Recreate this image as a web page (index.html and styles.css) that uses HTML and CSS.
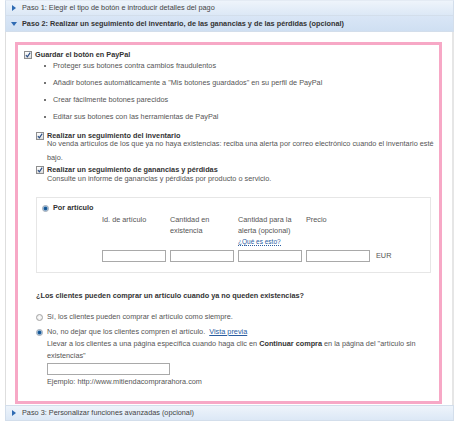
FILE: index.html
```html
<!DOCTYPE html>
<html lang="es">
<head>
<meta charset="utf-8">
<title>Paso 2</title>
<link rel="stylesheet" href="styles.css">
</head>
<body>
<div class="acc">
  <div class="head head-first"><span class="tri-r"></span><span>Paso 1: Elegir el tipo de botón e introducir detalles del pago</span></div>
  <div class="head head-open"><span class="tri-d"></span><span>Paso 2: Realizar un seguimiento del inventario, de las ganancias y de las pérdidas (opcional)</span></div>
  <div class="panel">
    <div class="pink">
      <div class="chk-row">
        <span class="cb"><svg width="8" height="8" viewBox="0 0 8 8"><path d="M1.9 4.1 L3.4 5.8 L6.2 1.7" fill="none" stroke="#2c4f86" stroke-width="1.2"/></svg></span>
        <span class="lbl">Guardar el botón en PayPal</span>
      </div>
      <ul class="bullets">
        <li>Proteger sus botones contra cambios fraudulentos</li>
        <li>Añadir botones automáticamente a "Mis botones guardados" en su perfil de PayPal</li>
        <li>Crear fácilmente botones parecidos</li>
        <li>Editar sus botones con las herramientas de PayPal</li>
      </ul>
      <div class="sub">
        <div class="chk-row r2">
          <span class="cb"><svg width="8" height="8" viewBox="0 0 8 8"><path d="M1.9 4.1 L3.4 5.8 L6.2 1.7" fill="none" stroke="#2c4f86" stroke-width="1.2"/></svg></span>
          <span class="lbl">Realizar un seguimiento del inventario</span>
        </div>
        <p class="desc">No venda artículos de los que ya no haya existencias: reciba una alerta por correo electrónico cuando el inventario esté<br>bajo.</p>
        <div class="chk-row r3">
          <span class="cb"><svg width="8" height="8" viewBox="0 0 8 8"><path d="M1.9 4.1 L3.4 5.8 L6.2 1.7" fill="none" stroke="#2c4f86" stroke-width="1.2"/></svg></span>
          <span class="lbl">Realizar un seguimiento de ganancias y pérdidas</span>
        </div>
        <p class="desc d3">Consulte un informe de ganancias y pérdidas por producto o servicio.</p>

        <div class="item-box">
          <div class="radio-row">
            <span class="rb on"></span><span class="lbl">Por artículo</span>
          </div>
          <div class="cols">
            <div class="col-lbl">Id. de artículo</div>
            <div class="col-lbl">Cantidad en<br>existencia</div>
            <div class="col-lbl">Cantidad para la<br>alerta (opcional)<br><a class="help">¿Qué es esto?</a></div>
            <div class="col-lbl">Precio</div>
            <div></div>
            <input class="field" type="text">
            <input class="field" type="text">
            <input class="field" type="text">
            <input class="field" type="text">
            <span class="cur">EUR</span>
          </div>
        </div>

        <div class="q">¿Los clientes pueden comprar un artículo cuando ya no queden existencias?</div>
        <div class="radio-row opt1"><span class="rb"></span><span>Sí, los clientes pueden comprar el artículo como siempre.</span></div>
        <div class="radio-row opt2"><span class="rb on"></span><span>No, no dejar que los clientes compren el artículo. <a class="link">Vista previa</a></span></div>
        <div class="indent">
          <p class="expl">Llevar a los clientes a una página específica cuando haga clic en <b>Continuar compra</b> en la página del "artículo sin<br>existencias"</p>
          <input class="field url" type="text">
          <p class="example">Ejemplo: http://www.mitiendacomprarahora.com</p>
        </div>
      </div>
    </div>
  </div>
  <div class="head head-last"><span class="tri-r"></span><span>Paso 3: Personalizar funciones avanzadas (opcional)</span></div>
</div>
</body>
</html>
```

FILE: styles.css
```css
html, body {
  margin: 0;
  padding: 0;
  background: #ffffff;
}
body {
  font-family: "Liberation Sans", Arial, sans-serif;
  font-size: 7.3px;
  line-height: 10px;
  color: #555555;
}
p { margin: 0; }
.acc {
  width: 449px;
  margin-left: 5px;
}
.head {
  box-sizing: border-box;
  height: 16px;
  display: flex;
  align-items: center;
  padding-left: 6px;
  color: #444444;
  background: linear-gradient(#eef4fb, #dce8f6);
  border: 1px solid #d3deeb;
  white-space: nowrap;
}
.head-first { border-top-color: #e4ebf4; }
.head-open {
  font-weight: bold;
  color: #333333;
  background: linear-gradient(#d9e6f6, #cfdff2);
  border-top: none;
  height: 16px;
}
.tri-r {
  width: 0;
  height: 0;
  border-top: 3px solid transparent;
  border-bottom: 3px solid transparent;
  border-left: 4px solid #2f6bb3;
  margin-right: 6px;
}
.tri-d {
  width: 0;
  height: 0;
  border-left: 3.5px solid transparent;
  border-right: 3.5px solid transparent;
  border-top: 4px solid #2f6bb3;
  margin-right: 5px;
  margin-left: -1px;
}
.panel {
  border-left: 1px solid #dedede;
  border-right: 2px solid #e6e6e6;
  padding: 10px 10px 1px 9px;
}
.pink {
  border: 3px solid #f7a8c6;
  padding: 0 4px 14px 6px;
}
.chk-row {
  display: flex;
  align-items: center;
  height: 10px;
  margin-top: 5px;
}
.chk-row .lbl, .radio-row .lbl {
  font-weight: bold;
  color: #333333;
}
.cb {
  box-sizing: border-box;
  width: 8px;
  height: 8px;
  border: 1px solid #8e8e8e;
  background: linear-gradient(#ffffff, #dcdcdc);
  display: flex;
  align-items: center;
  justify-content: center;
  margin-right: 3px;
  flex: none;
}
.cb svg { display: block; margin: -1px; }
.bullets {
  list-style: none;
  margin: 0;
  padding: 0 0 0 29px;
}
.bullets li {
  position: relative;
  line-height: 12px;
  margin-bottom: 5px;
  white-space: nowrap;
}
.bullets li::before {
  content: "";
  position: absolute;
  left: -9px;
  top: 5px;
  width: 2.4px;
  height: 2.4px;
  border-radius: 50%;
  background: #444444;
}
.sub {
  padding-left: 12px;
}
.chk-row.r2 { margin-top: 9px; height: 8px; }
.chk-row.r3 { margin-top: 2px; height: 8px; }
.desc {
  padding-left: 11px;
  line-height: 13.5px;
  margin-top: -3px;
  white-space: nowrap;
}
.desc.d3 { margin-top: -2px; }
.item-box {
  margin-top: 11.5px;
  margin-right: 4px;
  border: 1px solid #e6e6e6;
  padding: 5px 5px 10px 5px;
}
.radio-row {
  display: flex;
  align-items: center;
  height: 10px;
  white-space: nowrap;
}
.rb {
  box-sizing: border-box;
  width: 7px;
  height: 7px;
  border-radius: 50%;
  border: 1px solid #a3a3a3;
  background: radial-gradient(circle, #ffffff 0, #e4e4e4 100%);
  margin-right: 4px;
  flex: none;
}
.rb.on {
  border-color: #9aa6b3;
  background: radial-gradient(circle, #0f4f8c 0, #1d5f9c 1.4px, #8fb2d6 2.1px, #e8eef5 3px);
}
.cols {
  margin-left: 60px;
  margin-top: 0.5px;
  display: grid;
  grid-template-columns: 64px 64px 64px 64px auto;
  column-gap: 4px;
  align-items: start;
}
.col-lbl {
  line-height: 11px;
  white-space: nowrap;
  height: 33px;
}
.help {
  font-size: 6.5px;
  color: #2a5d9f;
  text-decoration: none;
  border-bottom: 1px dotted #2a5d9f;
  line-height: 8px;
}
.field {
  box-sizing: border-box;
  display: block;
  width: 64px;
  height: 12px;
  margin: 3.5px 0 0 0;
  padding: 0;
  border: 1px solid #a9a9a9;
  background: #ffffff;
  font-size: 7px;
}
.cur {
  margin-top: 3.5px;
  margin-left: 2px;
  line-height: 12px;
  white-space: nowrap;
}
.q {
  margin-top: 18px;
  font-weight: bold;
  color: #333333;
  white-space: nowrap;
}
.radio-row.opt1 { margin-top: 11px; }
.radio-row.opt2 { margin-top: 5px; }
.link {
  color: #2a5d9f;
  text-decoration: underline;
  margin-left: 2px;
}
.indent {
  padding-left: 11px;
}
.expl {
  margin-top: 1px;
  line-height: 12px;
  white-space: nowrap;
}
.expl b { color: #333333; }
.field.url {
  width: 123px;
  margin-top: 1px;
}
.example {
  margin-top: 2px;
  line-height: 10px;
}
.head-last {
  height: 16px;
}
```
